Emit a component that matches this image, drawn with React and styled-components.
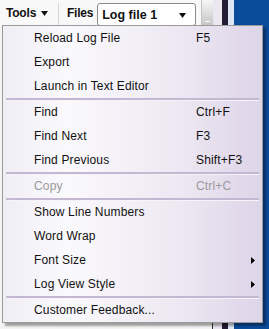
import React from "react";
import styled, { createGlobalStyle } from "styled-components";

const GlobalStyle = createGlobalStyle`
  html, body {
    margin: 0;
    padding: 0;
    background: #ffffff;
  }
  body {
    font-family: "Liberation Sans", Arial, sans-serif;
  }
`;

const items = [
  { label: "Reload Log File", key: "F5" },
  { label: "Export" },
  { label: "Launch in Text Editor" },
  { sep: true },
  { label: "Find", key: "Ctrl+F" },
  { label: "Find Next", key: "F3" },
  { label: "Find Previous", key: "Shift+F3" },
  { sep: true },
  { label: "Copy", key: "Ctrl+C", disabled: true },
  { sep: true },
  { label: "Show Line Numbers" },
  { label: "Word Wrap" },
  { label: "Font Size", sub: true },
  { label: "Log View Style", sub: true },
  { sep: true },
  { label: "Customer Feedback..." },
];

const App = () => {
  return (
    <>
      <GlobalStyle />
      <Screen>
        <Main>
          <Toolbar>
            <ToolGroup>
              <ToolLabel>Tools</ToolLabel>
              <DownArrow viewBox="0 0 7 5">
                <path d="M0 0 H7 L3.5 5 Z" fill="#111" />
              </DownArrow>
            </ToolGroup>
            <VSep />
            <ToolLabel>Files</ToolLabel>
            <Combo>
              <ComboText>Log file 1</ComboText>
              <DownArrow viewBox="0 0 7 5">
                <path d="M0 0 H7 L3.5 5 Z" fill="#111" />
              </DownArrow>
            </Combo>
            <Grip>
              <GripMark />
            </Grip>
          </Toolbar>
          <Content />
        </Main>
        <Edge />
        <DarkBar />
        <LightBar />
        <BlueArea />

        <Menu>
          {items.map((it, i) =>
            it.sep ? (
              <Separator key={i} />
            ) : (
              <Item key={i} $disabled={it.disabled}>
                <Label>{it.label}</Label>
                {it.key && <Shortcut>{it.key}</Shortcut>}
                {it.sub && (
                  <SubArrow viewBox="0 0 4 7">
                    <path d="M0 0 L4 3.5 L0 7 Z" fill="#000" />
                  </SubArrow>
                )}
              </Item>
            )
          )}
        </Menu>
      </Screen>
    </>
  );
};

const Screen = styled.div`
  width: 269px;
  height: 329px;
  position: relative;
  overflow: hidden;
  display: flex;
  background: #ffffff;
`;

const Main = styled.div`
  width: 213px;
  display: flex;
  flex-direction: column;
`;

const Toolbar = styled.div`
  height: 26px;
  display: flex;
  align-items: stretch;
  background: #f8f8f8;
`;

const Content = styled.div`
  flex: 1;
  background: #f4f4f4;
  border-right: 1px solid #333;
`;

const ToolGroup = styled.div`
  display: flex;
  align-items: center;
  gap: 5px;
  padding-left: 6px;
  width: 52px;
`;

const ToolLabel = styled.span`
  display: flex;
  align-items: center;
  font-weight: bold;
  font-size: 12px;
  letter-spacing: -0.2px;
  color: #111;
`;

const DownArrow = styled.svg`
  width: 7px;
  height: 5px;
  margin-top: 1px;
`;

const VSep = styled.div`
  width: 1px;
  margin: 3px 8px 0 0;
  background: #d6d6d6;
`;

const Combo = styled.div`
  width: 99px;
  height: 23px;
  margin: 3px 0 0 4px;
  box-sizing: border-box;
  border: 1px solid #8a8a8a;
  border-radius: 3px;
  background: #fff;
  display: flex;
  align-items: center;
  justify-content: space-between;
  padding: 0 9px 0 4px;
`;

const ComboText = styled.span`
  font-weight: bold;
  font-size: 12.5px;
  color: #111;
`;

const Grip = styled.div`
  width: 12px;
  margin-left: 5px;
  background: linear-gradient(to bottom, #f6f6f6, #c4c4c4);
  border-left: 1px solid #c4c4c4;
  display: flex;
  align-items: flex-end;
  justify-content: center;
  padding-bottom: 4px;
  box-sizing: border-box;
`;

const GripMark = styled.div`
  width: 5px;
  height: 1px;
  background: #fff;
`;

const Edge = styled.div`
  width: 9px;
  background: #ebe7f0;
`;

const DarkBar = styled.div`
  width: 6px;
  background: #221d33;
`;

const LightBar = styled.div`
  width: 6px;
  background: #dfe6f4;
`;

const BlueArea = styled.div`
  flex: 1;
  background: #0b4b9b;
`;

const Menu = styled.div`
  position: absolute;
  left: 2px;
  top: 25px;
  width: 261px;
  box-sizing: border-box;
  border: 1px solid #9a9a9a;
  background: linear-gradient(to right, #f0eef5 0%, #faf9fc 25%, #ece7f2 70%, #ddd4e8 100%);
  box-shadow: 3px 3px 2px rgba(0, 0, 0, 0.35);
  padding: 0 2px 0 2px;
`;

const Item = styled.div`
  height: 24px;
  display: flex;
  align-items: center;
  padding-left: 29px;
  font-size: 12px;
  letter-spacing: 0.15px;
  color: ${(p) => (p.$disabled ? "#9a9a9a" : "#111")};
  position: relative;
`;

const Label = styled.span`
  width: 162px;
`;

const Shortcut = styled.span``;

const SubArrow = styled.svg`
  position: absolute;
  right: 5px;
  top: 9px;
  width: 4px;
  height: 7px;
`;

const Separator = styled.div`
  height: 2px;
  margin: 0 1px;
  background: #c3b8d2;
  box-shadow: 0 1px 0 #f6f3f9;
`;

export default App;
